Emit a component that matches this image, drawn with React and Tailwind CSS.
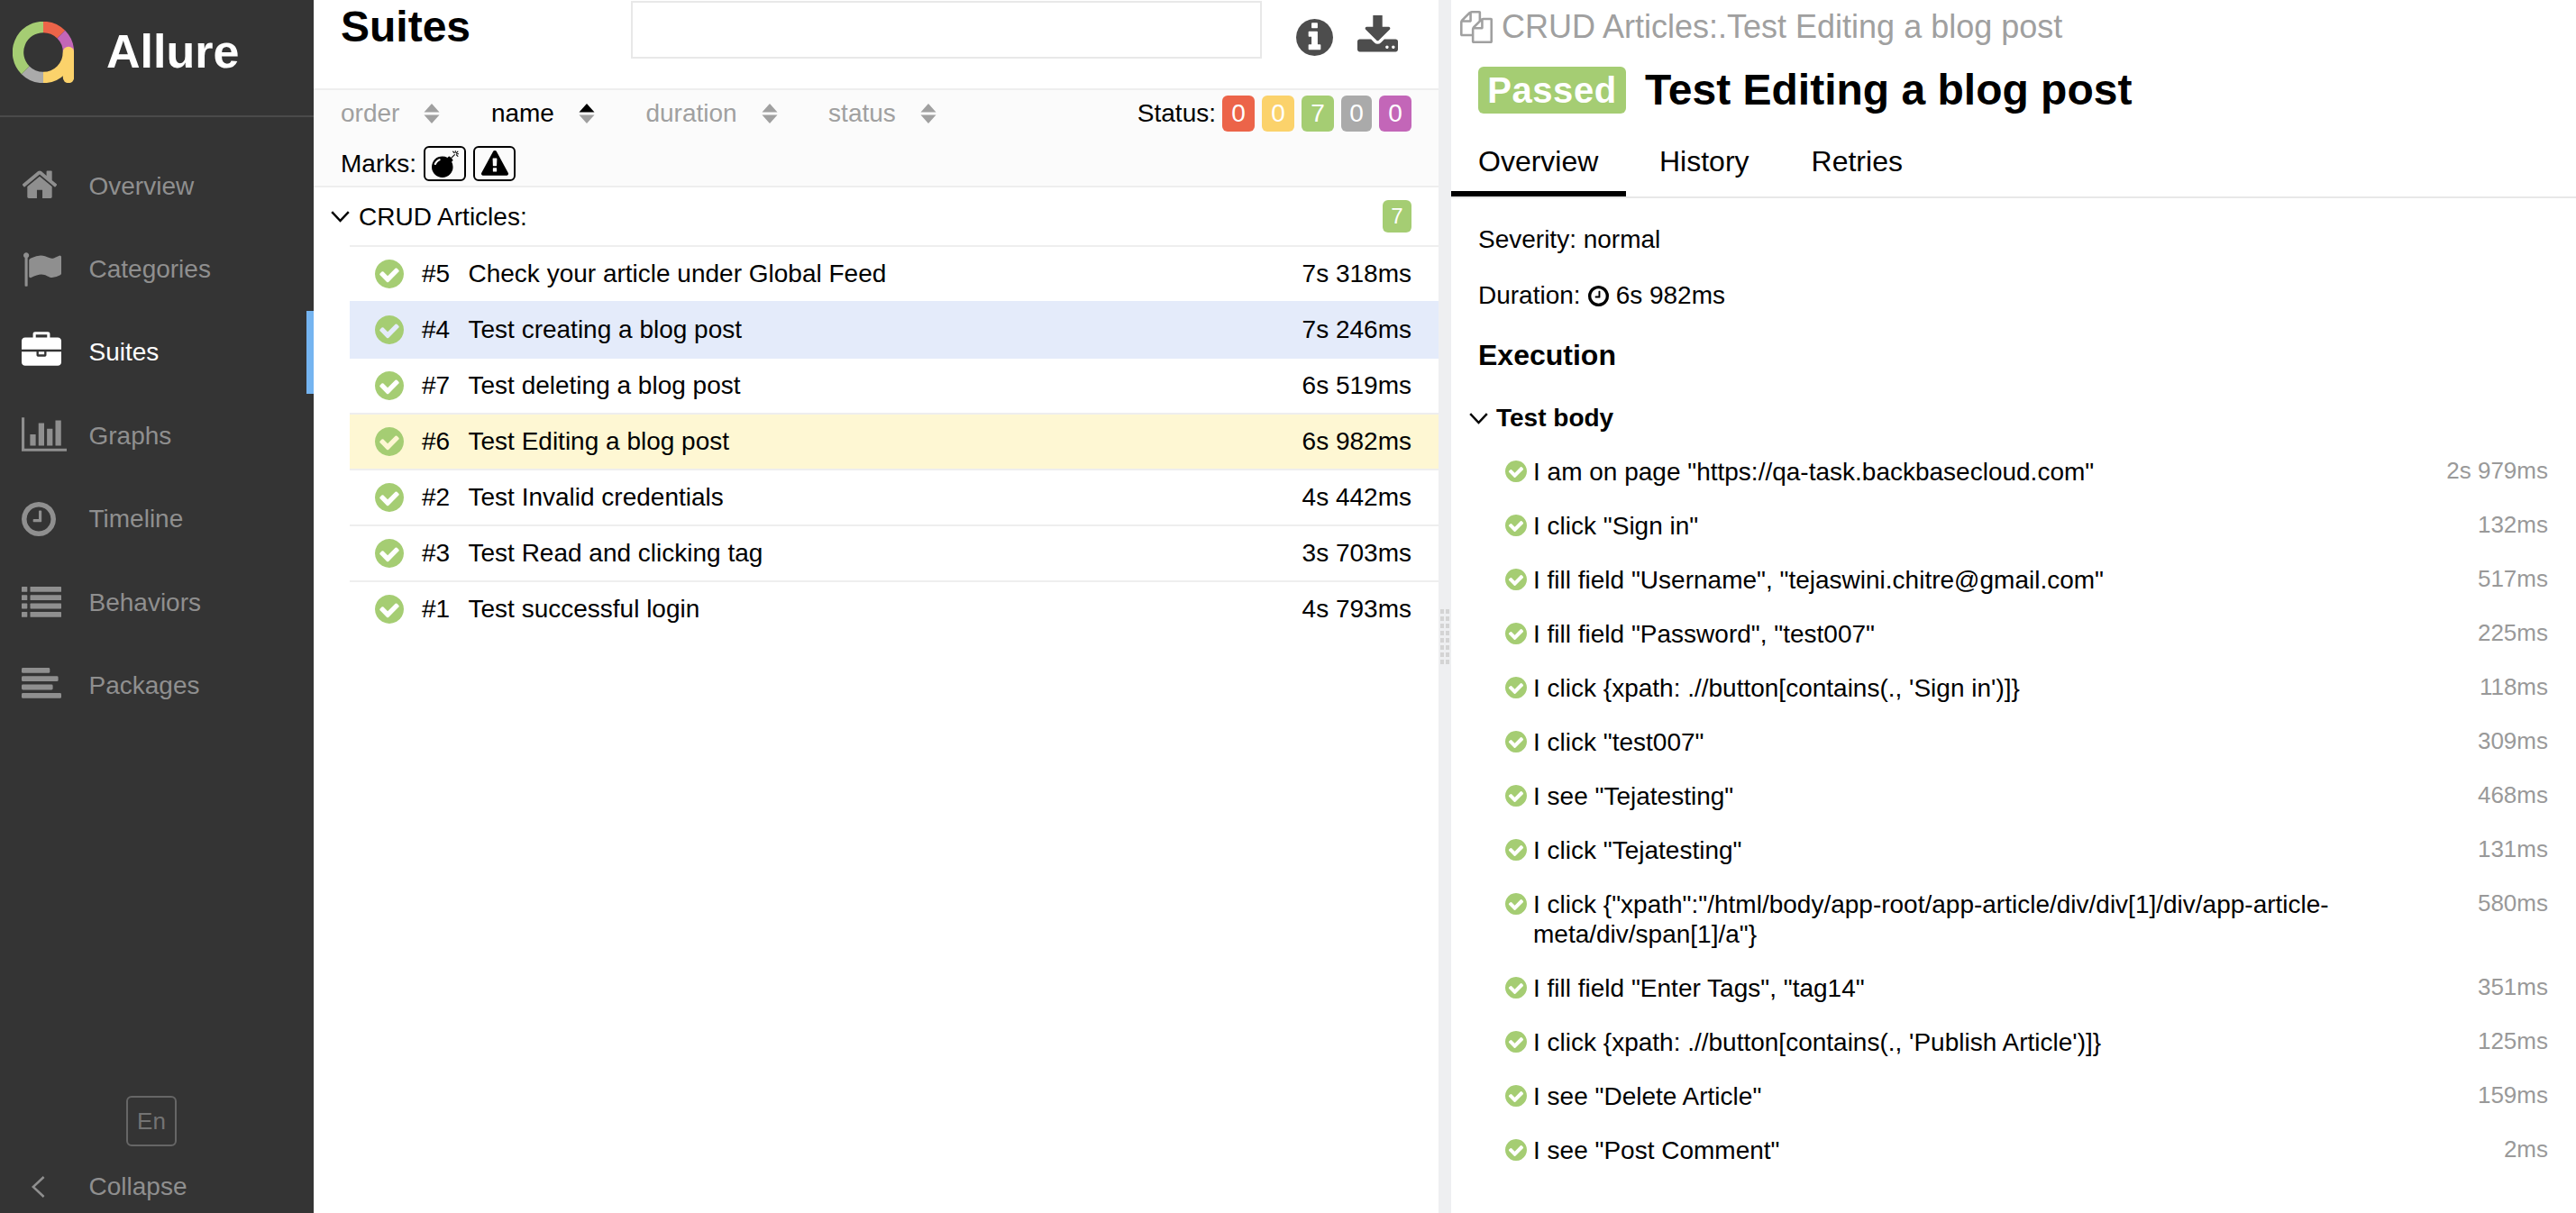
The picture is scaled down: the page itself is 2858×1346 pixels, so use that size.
const HOME = 'M1472 992v480q0 26-19 45t-45 19h-384v-384h-256v384h-384q-26 0-45-19t-19-45v-480q0-1 .5-3t.5-3l575-474 575 474q1 2 1 6zm223-69l-62 74q-8 9-21 11h-3q-13 0-21-7l-692-577-692 577q-12 8-24 7-13-2-21-11l-62-74q-8-10-7-23.5t11-21.5l719-599q32-26 76-26t76 26l244 204v-195q0-14 9-23t23-9h192q14 0 23 9t9 23v408l219 182q10 8 11 21.5t-7 23.5z'
const FLAG = 'M320 256q0 72-64 110v1266q0 13-9.5 22.5t-22.5 9.5h-64q-13 0-22.5-9.5t-9.5-22.5v-1266q-64-38-64-110 0-53 37.5-90.5t90.5-37.5 90.5 37.5 37.5 90.5zm1472 64v763q0 25-12.5 38.5t-39.5 27.5q-215 116-369 116-61 0-123.5-22t-108.5-48-115.5-48-142.5-22q-192 0-464 146-17 9-33 9-26 0-45-19t-19-45v-742q0-32 31-55 21-14 79-43 236-120 421-120 107 0 200 29t219 88q38 19 88 19 54 0 117.5-21t110-47 88-47 54.5-21q26 0 45 19t19 45z'
const BRIEFCASE = 'M640 256h512v-128h-512v128zm1152 640v480q0 66-47 113t-113 47h-1472q-66 0-113-47t-47-113v-480h672v160q0 26 19 45t45 19h320q26 0 45-19t19-45v-160h672zm-768 0v128h-256v-128h256zm768-480v384h-1792v-384q0-66 47-113t113-47h352v-160q0-40 28-68t68-28h576q40 0 68 28t28 68v160h352q66 0 113 47t47 113z'
const BARS = 'M640 896v512h-256v-512h256zm384-512v1024h-256v-1024h256zm1024 1152v128h-2048v-1536h128v1408h1920zm-640-896v768h-256v-768h256zm384-384v1152h-256v-1152h256z'
const CLOCK = 'M1024 544v448q0 14-9 23t-23 9h-320q-14 0-23-9t-9-23v-64q0-14 9-23t23-9h224v-352q0-14 9-23t23-9h64q14 0 23 9t9 23zm416 352q0-148-73-273t-198-198-273-73-273 73-198 198-73 273 73 273 198 198 273 73 273-73 198-198 73-273zm224 0q0 209-103 385.5t-279.5 279.5-385.5 103-385.5-103-279.5-279.5-103-385.5 103-385.5 279.5-279.5 385.5-103 385.5 103 279.5 279.5 103 385.5z'
const INFO = 'M1152 1376v-160q0-14-9-23t-23-9h-96v-512q0-14-9-23t-23-9h-320q-14 0-23 9t-9 23v160q0 14 9 23t23 9h96v320h-96q-14 0-23 9t-9 23v160q0 14 9 23t23 9h448q14 0 23-9t9-23zm-128-896v-160q0-14-9-23t-23-9h-192q-14 0-23 9t-9 23v160q0 14 9 23t23 9h192q14 0 23-9t9-23zm640 416q0 209-103 385.5t-279.5 279.5-385.5 103-385.5-103-279.5-279.5-103-385.5 103-385.5 279.5-279.5 385.5-103 385.5 103 279.5 279.5 103 385.5z'
const DOWNLOAD = 'M1344 1344q0-26-19-45t-45-19-45 19-19 45 19 45 45 19 45-19 19-45zm256 0q0-26-19-45t-45-19-45 19-19 45 19 45 45 19 45-19 19-45zm128-224v320q0 40-28 68t-68 28h-1472q-40 0-68-28t-28-68v-320q0-40 28-68t68-28h465l135 136q58 56 136 56t136-56l136-136h464q40 0 68 28t28 68zm-325-569q17 41-14 70l-448 448q-18 19-45 19t-45-19l-448-448q-31-29-14-70 17-39 59-39h256v-448q0-26 19-45t45-19h256q26 0 45 19t19 45v448h256q42 0 59 39z'
const BOMB = 'M571 589q-10-25-34-35t-49 0q-108 44-191 127t-127 191q-10 25 0 49t35 34q13 5 24 5 42 0 60-40 34-84 98.5-148.5t148.5-98.5q25-11 35-35t0-49zm942-356l46 46-244 243 68 68q19 19 19 45.5t-19 45.5l-64 64q89 161 89 343 0 143-55.5 273.5t-150 225-225 150-273.5 55.5-273.5-55.5-225-150-150-225-55.5-273.5 55.5-273.5 150-225 225-150 273.5-55.5q182 0 343 89l64-64q19-19 45.5-19t45.5 19l68 68zm8-56q-10 10-22 10-13 0-23-10l-91-90q-9-10-9-23t9-23q10-9 23-9t23 9l90 91q10 9 10 22.5t-10 22.5zm230 230q-11 9-23 9t-23-9l-90-91q-10-9-10-22.5t10-22.5q9-10 22.5-10t22.5 10l91 90q9 10 9 23t-9 23zm41-183q0 14-9 23t-23 9h-96q-14 0-23-9t-9-23 9-23 23-9h96q14 0 23 9t9 23zm-192-192v96q0 14-9 23t-23 9-23-9-9-23v-96q0-14 9-23t23-9 23 9 9 23zm151 55l-91 90q-10 10-22 10-13 0-23-10-10-9-10-22.5t10-22.5l90-91q10-9 23-9t23 9q9 10 9 23t-9 23z'
const WARNING = 'M1024 1375v-190q0-14-9.5-23.5t-22.5-9.5h-192q-13 0-22.5 9.5t-9.5 23.5v190q0 14 9.5 23.5t22.5 9.5h192q13 0 22.5-9.5t9.5-23.5zm-2-374l18-459q0-12-10-19-13-11-24-11h-220q-11 0-24 11-10 7-10 21l17 457q0 10 10 16.5t24 6.5h185q14 0 23.5-6.5t10.5-16.5zm-14-934l768 1408q35 63-2 126-17 29-46.5 46t-63.5 17h-1536q-34 0-63.5-17t-46.5-46q-37-63-2-126l768-1408q17-31 47-49t65-18 65 18 47 49z'
const CHECK = 'M1412 734q0-28-18-46l-91-90q-19-19-45-19t-45 19l-408 407-226-226q-19-19-45-19t-45 19l-91 90q-18 18-18 46 0 27 18 45l362 362q19 19 45 19 27 0 46-19l543-543q18-18 18-45zm252 162q0 209-103 385.5t-279.5 279.5-385.5 103-385.5-103-279.5-279.5-103-385.5 103-385.5 279.5-279.5 385.5-103 385.5 103 279.5 279.5 103 385.5z'
const FILES = 'M1696 384q40 0 68 28t28 68v1216q0 40-28 68t-68 28h-960q-40 0-68-28t-28-68v-288h-544q-40 0-68-28t-28-68v-672q0-40 20-88t48-76l408-408q28-28 76-48t88-20h416q40 0 68 28t28 68v328q68-40 128-40h416zm-544 213l-299 299h299v-299zm-640-384l-299 299h299v-299zm196 647l316-316v-416h-384v416q0 40-28 68t-68 28h-416v640h512v-256q0-40 20-88t48-76zm956 804v-1152h-384v416q0 40-28 68t-68 28h-416v640h896z'

function Fa({ d, box = '0 0 1792 1792', className }) {
  return (
    <svg viewBox={box} className={className} fill="currentColor">
      <path d={d} />
    </svg>
  )
}

function Logo() {
  return (
    <svg viewBox="0 0 68 68" className="w-[68px] h-[68px]" fill="none" strokeWidth="12.4">
      <path d="M34 6 A28 28 0 0 1 53.8 14.2" stroke="#ec6449" />
      <path d="M53.8 14.2 A28 28 0 0 1 62 34" stroke="#c366b8" />
      <path d="M62 34 A28 28 0 0 1 34 62" stroke="#fbd26b" />
      <path d="M34 62 A28 28 0 0 1 14.2 53.8" stroke="#aaaaaa" />
      <path d="M14.2 53.8 A28 28 0 0 1 34 6" stroke="#a5cd73" />
      <path d="M62 34 V62" stroke="#fbd26b" strokeLinecap="round" />
    </svg>
  )
}

function ListIcon() {
  return (
    <svg viewBox="0 0 44 34" className="w-[44px] h-[34px]" fill="currentColor">
      {[0, 9.3, 18.6, 28].map(y => (
        <g key={y}>
          <rect x="0" y={y} width="6.3" height="5.8" rx="0.6" />
          <rect x="9.5" y={y} width="34.5" height="5.8" rx="0.6" />
        </g>
      ))}
    </svg>
  )
}

function AlignIcon() {
  return (
    <svg viewBox="0 0 44 34" className="w-[44px] h-[34px]" fill="currentColor">
      <rect x="0" y="0" width="31.3" height="5.8" rx="1.4" />
      <rect x="0" y="9.3" width="40.6" height="5.8" rx="1.4" />
      <rect x="0" y="18.6" width="34.6" height="5.8" rx="1.4" />
      <rect x="0" y="28" width="44" height="5.8" rx="1.4" />
    </svg>
  )
}

function Chevron() {
  return (
    <svg viewBox="0 0 21 13" className="w-[21px] h-[13px] shrink-0 mr-[10px]" fill="none" stroke="currentColor" strokeWidth="2.5">
      <path d="M1.2 1.2 L10.5 11 L19.8 1.2" />
    </svg>
  )
}

const NAV = [
  { label: 'Overview', icon: <Fa d={HOME} box="96 192 1600 1344" className="w-[38px] h-[32px] ml-[1px] mb-[4px]" /> },
  { label: 'Categories', icon: <Fa d={FLAG} box="64 128 1728 1536" className="w-[42px] h-[38px] ml-[2px]" /> },
  { label: 'Suites', active: true, icon: <Fa d={BRIEFCASE} box="0 0 1792 1536" className="w-[44px] h-[38px] mb-[8px]" /> },
  { label: 'Graphs', icon: <Fa d={BARS} box="0 128 2048 1536" className="w-[50px] h-[38px] mb-[3px]" /> },
  { label: 'Timeline', icon: <Fa d={CLOCK} box="128 128 1536 1536" className="w-[38px] h-[38px]" /> },
  { label: 'Behaviors', icon: <ListIcon /> },
  { label: 'Packages', icon: <div className="mb-[5px]"><AlignIcon /></div> },
]

const STATUS = [
  { n: 0, bg: 'bg-[#ec6449]', w: 'w-[36px]' },
  { n: 0, bg: 'bg-[#fbd26b]', w: 'w-[36px]' },
  { n: 7, bg: 'bg-[#a5cd73]', w: 'w-[36px]' },
  { n: 0, bg: 'bg-[#aaaaaa]', w: 'w-[34px]' },
  { n: 0, bg: 'bg-[#c366b8]', w: 'w-[36px]' },
]

const TESTS = [
  { id: '#5', name: 'Check your article under Global Feed', time: '7s 318ms', row: 'border-[#eeeeee]' },
  { id: '#4', name: 'Test creating a blog post', time: '7s 246ms', row: 'border-[#e4ebfa] bg-[#e4ebfa]' },
  { id: '#7', name: 'Test deleting a blog post', time: '6s 519ms', row: 'border-[#e4ebfa]' },
  { id: '#6', name: 'Test Editing a blog post', time: '6s 982ms', row: 'border-[#eeeeee] bg-[#fef7d3]' },
  { id: '#2', name: 'Test Invalid credentials', time: '4s 442ms', row: 'border-[#eeeeee]' },
  { id: '#3', name: 'Test Read and clicking tag', time: '3s 703ms', row: 'border-[#eeeeee]' },
  { id: '#1', name: 'Test successful login', time: '4s 793ms', row: 'border-[#eeeeee]' },
]

const STEPS = [
  ['I am on page "https://qa-task.backbasecloud.com"', '2s 979ms'],
  ['I click "Sign in"', '132ms'],
  ['I fill field "Username", "tejaswini.chitre@gmail.com"', '517ms'],
  ['I fill field "Password", "test007"', '225ms'],
  ["I click {xpath: .//button[contains(., 'Sign in')]}", '118ms'],
  ['I click "test007"', '309ms'],
  ['I see "Tejatesting"', '468ms'],
  ['I click "Tejatesting"', '131ms'],
  ['I click {"xpath":"/html/body/app-root/app-article/div/div[1]/div/app-article-meta/div/span[1]/a"}', '580ms'],
  ['I fill field "Enter Tags", "tag14"', '351ms'],
  ["I click {xpath: .//button[contains(., 'Publish Article')]}", '125ms'],
  ['I see "Delete Article"', '159ms'],
  ['I see "Post Comment"', '2ms'],
]

function SortArrows({ active }) {
  return (
    <svg viewBox="0 0 18 22" className="w-[18px] h-[22px] shrink-0">
      <path d="M9 0 L17.5 9.5 H0.5 Z" fill={active ? '#000000' : '#a0a0a0'} />
      <path d="M0.5 12.5 H17.5 L9 22 Z" fill="#a0a0a0" />
    </svg>
  )
}

function Sort({ label, active }) {
  return (
    <div className={`flex items-center gap-[27px] ${active ? 'text-black' : 'text-[#a0a0a0]'}`}>
      <span>{label}</span>
      <SortArrows active={active} />
    </div>
  )
}

function Sidebar() {
  return (
    <aside className="w-[348px] shrink-0 h-full bg-[#343434] flex flex-col">
      <div className="h-[130px] shrink-0 border-b-2 border-[#4a4a4a] flex items-start pl-[14px] pt-[24px]">
        <Logo />
        <span className="ml-[36px] text-[52px] leading-[66px] font-bold text-white">Allure</span>
      </div>
      <nav className="pt-[30px] flex flex-col">
        {NAV.map(item => (
          <div
            key={item.label}
            className={`h-[92.4px] flex items-center pl-[24px] border-r-8 ${
              item.active ? 'border-[#75b4f0] text-white' : 'border-transparent text-[#8f8f8f]'
            }`}
          >
            <div className="w-[74.5px] shrink-0 flex items-center">{item.icon}</div>
            <span className="text-[28px] pt-[1px]">{item.label}</span>
          </div>
        ))}
      </nav>
      <div className="mt-auto flex flex-col">
        <div className="w-[56px] h-[56px] ml-[140px] mb-[2px] border-2 border-[#666666] rounded-[6px] flex items-center justify-center text-[26px] text-[#737373]">
          En
        </div>
        <div className="h-[72px] flex items-center pt-[14px] pl-[35px] text-[#8f8f8f]">
          <svg viewBox="0 0 15 24" className="w-[15px] h-[24px] mr-[48.5px]" fill="none" stroke="currentColor" strokeWidth="2.5">
            <path d="M13.6 1 L1.8 12 L13.6 23" />
          </svg>
          <span className="text-[28px]">Collapse</span>
        </div>
      </div>
    </aside>
  )
}

function SuitesPanel() {
  return (
    <section className="w-[1248px] shrink-0 h-full flex flex-col text-[28px] text-black">
      <header className="h-[98px] shrink-0 flex items-start pl-[30px]">
        <h1 className="w-[322px] text-[48px] leading-[56px] font-bold pt-[2px]">Suites</h1>
        <div className="w-[700px] h-[64px] mt-[1px] border-2 border-[#e8e8e8]" />
        <Fa d={INFO} box="128 128 1536 1536" className="w-[41px] h-[41px] mt-[21px] ml-[38px] text-[#4d4d4d]" />
        <Fa d={DOWNLOAD} box="64 64 1664 1472" className="w-[45px] h-[41px] mt-[17px] ml-[27px] text-[#4d4d4d]" />
      </header>

      <div className="h-[110px] shrink-0 bg-[#fbfbfb] border-y-2 border-[#eeeeee] flex flex-col pl-[30px] pr-[30px]">
        <div className="h-[52px] flex items-center gap-[56.5px]">
          <Sort label="order" />
          <Sort label="name" active />
          <Sort label="duration" />
          <Sort label="status" />
          <div className="ml-auto flex items-center">
            <span className="mr-[7px]">Status:</span>
            <div className="flex gap-[8px]">
              {STATUS.map((s, i) => (
                <span key={i} className={`${s.w} h-[40px] ${s.bg} rounded-[6px] text-white flex items-center justify-center`}>
                  {s.n}
                </span>
              ))}
            </div>
          </div>
        </div>
        <div className="flex-1 flex items-center pt-[5px]">
          <span className="mr-[8px]">Marks:</span>
          <div className="flex gap-[8px]">
            <span className="w-[47px] h-[39px] border-2 border-black rounded-[6px] flex items-center justify-center">
              <Fa d={BOMB} className="w-[30px] h-[30px]" />
            </span>
            <span className="w-[47px] h-[39px] border-2 border-black rounded-[6px] flex items-center justify-center">
              <Fa d={WARNING} className="w-[30px] h-[30px]" />
            </span>
          </div>
        </div>
      </div>

      <div className="h-[64px] shrink-0 flex items-center pl-[19px] pr-[30px]">
        <Chevron />
        <span className="pt-[1px]">CRUD Articles:</span>
        <span className="ml-auto w-[32px] h-[36px] bg-[#a5cd73] rounded-[6px] text-white text-[24px] flex items-center justify-center">
          7
        </span>
      </div>

      <div className="ml-[40px] flex flex-col">
        {TESTS.map(t => (
          <div key={t.id} className={`h-[62px] border-t-2 flex items-center pl-[28px] pr-[30px] ${t.row}`}>
            <Fa d={CHECK} box="128 128 1536 1536" className="w-[32px] h-[32px] text-[#a5cd73] shrink-0" />
            <span className="w-[51.5px] ml-[20px] shrink-0">{t.id}</span>
            <span>{t.name}</span>
            <span className="ml-auto">{t.time}</span>
          </div>
        ))}
      </div>
    </section>
  )
}

function Splitter() {
  return (
    <div className="w-[14px] shrink-0 h-full bg-[#eeeff1] flex items-center justify-center pt-[66px]">
      <div className="grid grid-cols-2 gap-x-[2px] gap-y-[3px]">
        {Array.from({ length: 16 }).map((_, i) => (
          <span key={i} className="w-[4px] h-[5px] bg-[#d4d4d4]" />
        ))}
      </div>
    </div>
  )
}

function TestPanel() {
  return (
    <section className="flex-1 min-w-0 h-full flex flex-col text-[28px] text-black">
      <div className="h-[60px] shrink-0 flex items-center pl-[10px] text-[36px] text-[#a0a0a0]">
        <Fa d={FILES} className="w-[36px] h-[36px] mr-[10px]" />
        <span>CRUD Articles:.Test Editing a blog post</span>
      </div>
      <div className="mt-[14px] h-[52px] shrink-0 flex items-center pl-[30px]">
        <span className="w-[164px] h-[52px] bg-[#a5cd73] rounded-[6px] text-white text-[40px] tracking-[0.6px] font-bold flex items-center justify-center">
          Passed
        </span>
        <h2 className="ml-[21px] text-[48px] font-bold">Test Editing a blog post</h2>
      </div>

      <div className="mt-[20px] h-[74px] shrink-0 border-b-2 border-[#e8e8e8] flex text-[32px]">
        <div className="w-[194px] h-[72px] pl-[30px] border-b-[6px] border-black flex items-center">Overview</div>
        <div className="ml-[5px] h-[72px] pb-[6px] px-[32px] flex items-center">History</div>
        <div className="ml-[5px] h-[72px] pb-[6px] px-[32px] flex items-center">Retries</div>
      </div>

      <div className="mt-[30px] pl-[30px] leading-[32px]">Severity: normal</div>
      <div className="mt-[30px] pl-[30px] leading-[32px] flex items-center">
        Duration:
        <Fa d={CLOCK} box="128 128 1536 1536" className="w-[23px] h-[23px] mx-[8px]" />
        6s 982ms
      </div>
      <div className="mt-[30px] pl-[30px] h-[40px] text-[32px] font-bold flex items-center">Execution</div>
      <div className="mt-[34px] pl-[20px] h-[32px] font-bold flex items-center">
        <Chevron />
        <span className="-ml-[1px]">Test body</span>
      </div>

      <div className="mt-[13px] flex flex-col">
        {STEPS.map(([text, time]) => (
          <div key={text} className="flex items-start pl-[60px] pr-[31px] py-[13.5px] leading-[33px]">
            <Fa d={CHECK} box="128 128 1536 1536" className="w-[24px] h-[24px] mt-[4px] mr-[7px] text-[#a5cd73] shrink-0" />
            <span className="w-[890px]">{text}</span>
            <span className="ml-auto text-[26px] leading-[30px] text-[#999999]">{time}</span>
          </div>
        ))}
      </div>
    </section>
  )
}

export default function App() {
  return (
    <div className="flex w-full h-[1346px] overflow-hidden bg-white [font-family:'Liberation_Sans',Arial,sans-serif]">
      <Sidebar />
      <SuitesPanel />
      <Splitter />
      <TestPanel />
    </div>
  )
}
